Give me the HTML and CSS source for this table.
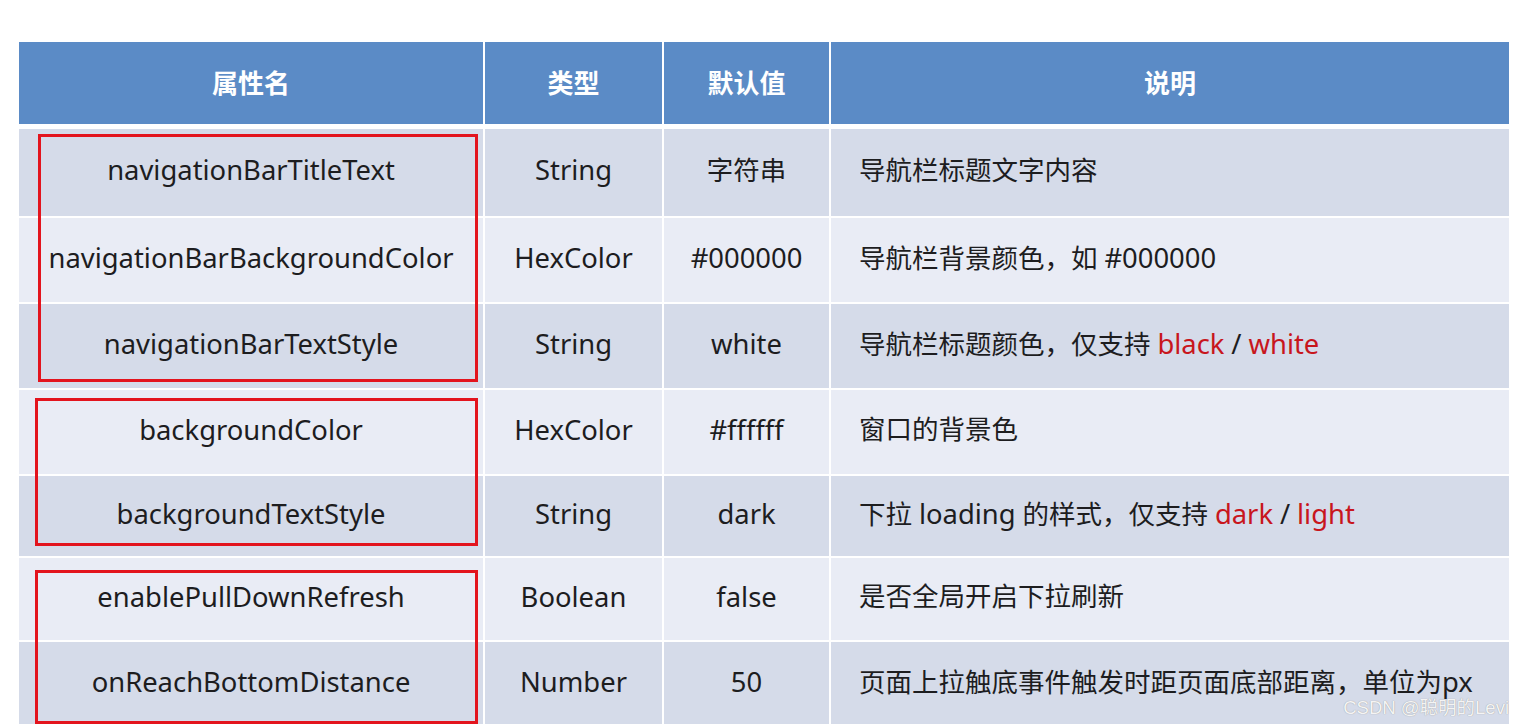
FILE: index.html
```html
<!DOCTYPE html>
<html lang="zh-CN">
<head>
<meta charset="utf-8">
<title>全局配置 window 属性</title>
<link rel="stylesheet" href="styles.css">
</head>
<body>
<div class="table-wrap">
  <div class="table">
    <div class="row head">
      <div class="cell c">属性名</div>
      <div class="cell c">类型</div>
      <div class="cell c">默认值</div>
      <div class="cell c">说明</div>
    </div>
    <div class="row dark r1">
      <div class="cell c en">navigationBarTitleText</div>
      <div class="cell c en">String</div>
      <div class="cell c">字符串</div>
      <div class="cell l"><span class="txt">导航栏标题文字内容</span></div>
    </div>
    <div class="row light r2">
      <div class="cell c en">navigationBarBackgroundColor</div>
      <div class="cell c en">HexColor</div>
      <div class="cell c en">#000000</div>
      <div class="cell l"><span class="txt">导航栏背景颜色，如 <span class="w">#000000</span></span></div>
    </div>
    <div class="row dark r3">
      <div class="cell c en">navigationBarTextStyle</div>
      <div class="cell c en">String</div>
      <div class="cell c en">white</div>
      <div class="cell l"><span class="txt">导航栏标题颜色，仅支持 <span class="w red">black</span> <span class="w">/</span> <span class="w red">white</span></span></div>
    </div>
    <div class="row light r4">
      <div class="cell c en">backgroundColor</div>
      <div class="cell c en">HexColor</div>
      <div class="cell c en">#ffffff</div>
      <div class="cell l"><span class="txt">窗口的背景色</span></div>
    </div>
    <div class="row dark r5">
      <div class="cell c en">backgroundTextStyle</div>
      <div class="cell c en">String</div>
      <div class="cell c en">dark</div>
      <div class="cell l"><span class="txt">下拉 <span class="w">loading</span> 的样式，仅支持 <span class="w red">dark</span> <span class="w">/</span> <span class="w red">light</span></span></div>
    </div>
    <div class="row light r6">
      <div class="cell c en">enablePullDownRefresh</div>
      <div class="cell c en">Boolean</div>
      <div class="cell c en">false</div>
      <div class="cell l"><span class="txt">是否全局开启下拉刷新</span></div>
    </div>
    <div class="row dark r7">
      <div class="cell c en">onReachBottomDistance</div>
      <div class="cell c en">Number</div>
      <div class="cell c en">50</div>
      <div class="cell l"><span class="txt">页面上拉触底事件触发时距页面底部距离，单位为<span class="w">px</span></span></div>
    </div>
  </div>
  <div class="mark mark-1"></div>
  <div class="mark mark-2"></div>
  <div class="mark mark-3"></div>
  <div class="watermark">CSDN @聪明的Levi</div>
</div>
</body>
</html>
```

FILE: styles.css
```css
html, body {
  margin: 0;
  padding: 0;
  background: #ffffff;
  overflow: hidden;
}

body {
  width: 1526px;
  height: 724px;
  font-family: "Noto Sans", "Noto Sans CJK SC", sans-serif;
  color: #1d1d1f;
}

.table-wrap {
  position: relative;
  margin: 42px 0 0 19px;
  width: 1490px;
}

.table {
  display: flex;
  flex-direction: column;
  gap: 2px;
}

.row {
  display: grid;
  grid-template-columns: 464px 177px 165px 1fr;
  column-gap: 2px;
  height: 84px;
}

.row.head {
  height: 82px;
  margin-bottom: 3px;
}

.row.r1 { height: 87px; }
.row.r4 { height: 84px; }
.row.r5 { height: 80px; }
.row.r6 { height: 82px; }
.row.r7 { height: 84px; }

.cell {
  display: flex;
  align-items: center;
  font-size: 26.5px;
  line-height: 1;
  white-space: nowrap;
  padding-bottom: 5px;
  box-sizing: border-box;
}

.cell.en { font-size: 27.4px; }
.w { font-size: 27.4px; }

.cell.c { justify-content: center; }
.cell.l { justify-content: flex-start; padding-left: 28px; }
.txt { white-space: nowrap; }

.head .cell {
  background: #5b8bc6;
  color: #ffffff;
  font-family: "Noto Sans CJK SC", sans-serif;
  font-weight: 700;
  font-size: 26px;
  padding-bottom: 3px;
}

.dark .cell { background: #d5dbe9; }
.light .cell { background: #e9ecf5; }

.red { color: #c8161d; }

.mark {
  position: absolute;
  border: 3px solid #e3141d;
}

.mark-1 { left: 19px; top: 92px; width: 434px; height: 242px; }
.mark-2 { left: 16px; top: 356px; width: 437px; height: 142px; }
.mark-3 { left: 16px; top: 528px; width: 437px; height: 148px; }

.watermark {
  position: absolute;
  right: 0;
  top: 657px;
  font-family: "Liberation Sans", "Noto Sans CJK SC", sans-serif;
  font-size: 18.5px;
  line-height: 1;
  color: #f4f4f4;
  text-shadow: 0 0 1px #8c8c8c;
  white-space: nowrap;
}
```
